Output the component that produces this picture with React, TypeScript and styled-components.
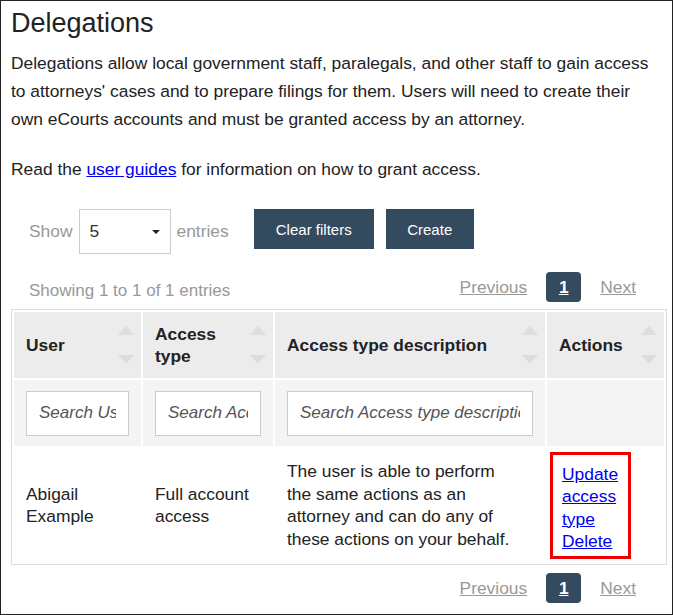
import React from 'react'
import styled, { createGlobalStyle } from 'styled-components'

const Global = createGlobalStyle`
  html, body { margin: 0; padding: 0; background: #fff; }
  body { font-family: "Liberation Sans", Arial, sans-serif; color: #222; }
`

const Frame = styled.div`
  width: 673px;
  height: 615px;
  box-sizing: border-box;
  border: 1px solid #222;
  padding: 0 6px 0 10px;
  overflow: hidden;
`

const Title = styled.h1`
  margin: 5px 0 0;
  font-size: 27px;
  font-weight: 400;
  line-height: 34px;
`

const Para = styled.p<{ $gap?: number }>`
  margin: ${p => p.$gap ?? 9}px 0 0;
  font-size: 17.4px;
  line-height: 28px;
  a { color: #0000ee; }
`

const Controls = styled.div`
  display: flex;
  align-items: flex-start;
  margin: 26px 0 0 18px;
  color: #999;
  font-size: 17.4px;
`

const Label = styled.span`
  line-height: 45px;
`

const Select = styled.div`
  width: 92px;
  height: 45px;
  box-sizing: border-box;
  border: 1px solid #ccc;
  margin: 0 6px;
  display: flex;
  align-items: center;
  justify-content: space-between;
  padding: 0 10px;
  color: #333;
  &::after {
    content: '';
    border: 4px solid transparent;
    border-top: 4px solid #222;
    border-bottom: 0;
  }
`

const Btn = styled.button<{ $w: number; $ml?: number }>`
  background: #344a5e;
  color: #fff;
  border: 0;
  height: 40px;
  width: ${p => p.$w}px;
  margin-left: ${p => p.$ml ?? 12}px;
  font-family: inherit;
  font-size: 15px;
`

const InfoRow = styled.div`
  display: flex;
  justify-content: space-between;
  align-items: center;
  margin: 16px 0 0 18px;
  color: #999;
  font-size: 17px;
  height: 34px;
`

const Pager = styled.div`
  display: flex;
  align-items: center;
  margin-right: 11px;
  font-size: 17.4px;
  a { color: #999; text-decoration: underline; padding: 0 19px; }
`

const PageNum = styled.span`
  background: #344a5e;
  color: #fff;
  font-weight: 700;
  text-decoration: underline;
  border-radius: 4px;
  width: 35px;
  height: 30px;
  display: flex;
  align-items: center;
  justify-content: center;
`

const Table = styled.table`
  width: 656px;
  margin-top: 5px;
  border: 1px solid #ddd;
  border-collapse: separate;
  border-spacing: 2px;
  font-size: 17.4px;
  table-layout: fixed;
`

const Th = styled.th`
  background: #ececec;
  text-align: left;
  height: 66px;
  padding: 0 12px;
  line-height: 22px;
  position: relative;
  &::before, &::after {
    content: '';
    position: absolute;
    right: 7px;
    border: 8px solid transparent;
  }
  &::before { top: 14px; border-bottom: 9px solid #ddd; border-top: 0; }
  &::after { bottom: 14px; border-top: 9px solid #ddd; border-bottom: 0; }
`

const FilterCell = styled.td`
  background: #f4f4f4;
  height: 66px;
  padding: 0 12px;
`

const Search = styled.input`
  width: 100%;
  box-sizing: border-box;
  height: 45px;
  border: 1px solid #ccc;
  padding: 0 12px;
  font-family: inherit;
  font-size: 17px;
  font-style: italic;
  &::placeholder { color: #555; }
`

const Td = styled.td<{ $pr?: number; $pl?: number }>`
  padding: 0 ${p => p.$pr ?? 12}px 0 ${p => p.$pl ?? 12}px;
  height: 114px;
  line-height: 22.5px;
  color: #222;
`

const ActionBox = styled.div`
  border: 3px solid #e00;
  width: 57px;
  padding: 8px 9px 3px 9px;
  a { color: #0000ee; display: block; }
`

const FootPager = styled.div`
  display: flex;
  justify-content: flex-end;
  margin-top: 8px;
`

function Pagination() {
  return (
    <Pager>
      <a>Previous</a>
      <PageNum>1</PageNum>
      <a>Next</a>
    </Pager>
  )
}

export default function App() {
  return (
    <Frame>
      <Global />
      <Title>Delegations</Title>
      <Para>
        Delegations allow local government staff, paralegals, and other staff to gain access
        to attorneys' cases and to prepare filings for them. Users will need to create their
        own eCourts accounts and must be granted access by an attorney.
      </Para>
      <Para $gap={22}>
        Read the <a href="#">user guides</a> for information on how to grant access.
      </Para>
      <Controls>
        <Label>Show</Label>
        <Select>5</Select>
        <Label>entries</Label>
        <Btn $w={120} $ml={25}>Clear filters</Btn>
        <Btn $w={88}>Create</Btn>
      </Controls>
      <InfoRow>
        <span style={{ marginTop: 8 }}>Showing 1 to 1 of 1 entries</span>
        <Pagination />
      </InfoRow>
      <Table>
        <colgroup>
          <col style={{ width: 127 }} />
          <col style={{ width: 130 }} />
          <col style={{ width: 270 }} />
          <col />
        </colgroup>
        <thead>
          <tr>
            <Th>User</Th>
            <Th>Access<br />type</Th>
            <Th>Access type description</Th>
            <Th>Actions</Th>
          </tr>
          <tr>
            <FilterCell><Search placeholder="Search User" /></FilterCell>
            <FilterCell><Search placeholder="Search Access type" /></FilterCell>
            <FilterCell><Search placeholder="Search Access type description" /></FilterCell>
            <FilterCell />
          </tr>
        </thead>
        <tbody>
          <tr>
            <Td>Abigail<br />Example</Td>
            <Td>Full account access</Td>
            <Td $pr={30}>The user is able to perform the same actions as an attorney and can do any of these actions on your behalf.</Td>
            <Td $pl={3}>
              <ActionBox>
                <a href="#">Update access type</a>
                <a href="#">Delete</a>
              </ActionBox>
            </Td>
          </tr>
        </tbody>
      </Table>
      <FootPager>
        <Pagination />
      </FootPager>
    </Frame>
  )
}
